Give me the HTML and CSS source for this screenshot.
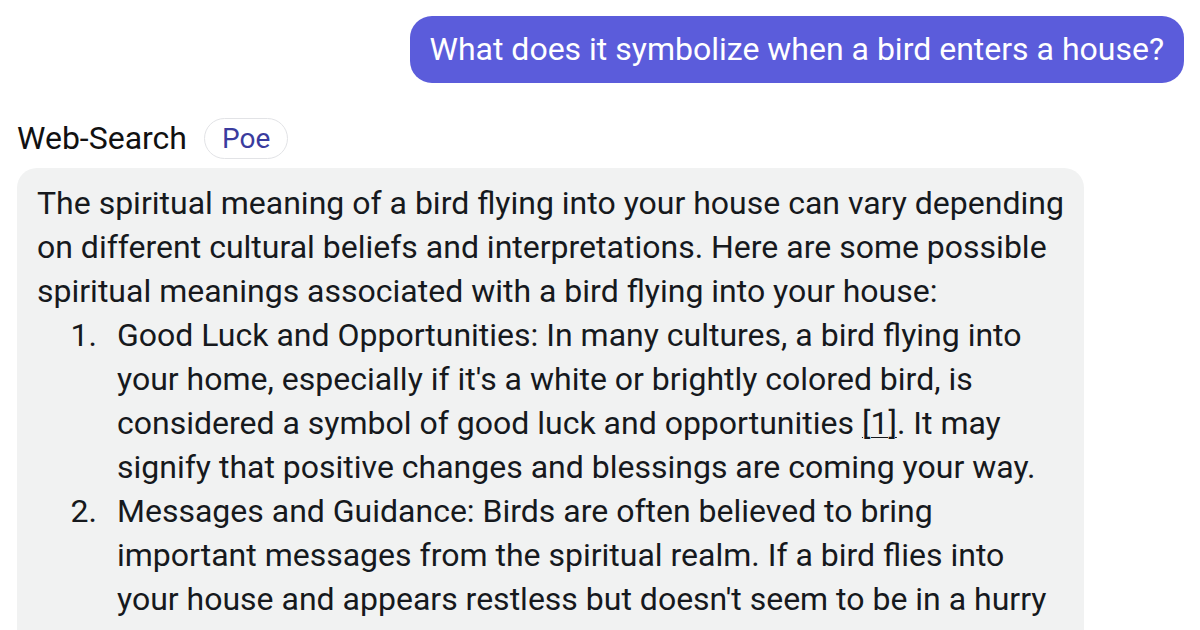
FILE: index.html
```html
<!DOCTYPE html>
<html>
<head>
<meta charset="utf-8">
<link rel="stylesheet" href="styles.css">
</head>
<body>
<div class="page">
  <div class="user-row">
    <div class="user-bubble">What does it symbolize when a bird enters a house?</div>
  </div>
  <div class="bot-head">
    <span class="bot-name">Web-Search</span>
    <span class="pill">Poe</span>
  </div>
  <div class="bot-bubble">
    <p class="para">The spiritual meaning of a bird flying into your house can vary depending on different cultural beliefs and interpretations. Here are some possible spiritual meanings associated with a bird flying into your house:</p>
    <ol class="list">
      <li class="item"><span class="num">1.</span><span class="txt">Good Luck and Opportunities: In many cultures, a bird flying into your home, especially if it's a white or brightly colored bird, is considered a symbol of good luck and opportunities <a class="ref">[1]</a>. It may signify that positive changes and blessings are coming your way.</span></li>
      <li class="item"><span class="num">2.</span><span class="txt">Messages and Guidance: Birds are often believed to bring important messages from the spiritual realm. If a bird flies into your house and appears restless but doesn't seem to be in a hurry to leave, it might be a sign that it is trying to deliver a message to you.</span></li>
    </ol>
  </div>
</div>
</body>
</html>
```
FILE: styles.css
```css
html, body {
  margin: 0;
  padding: 0;
  background: #ffffff;
  overflow: hidden;
}
body {
  width: 1200px;
  height: 630px;
  font-family: Roboto, "Noto Sans", sans-serif;
  color: #16191d;
}
.page {
  padding: 16px 16px 0 17px;
}
.user-row {
  display: flex;
  justify-content: flex-end;
}
.user-bubble {
  background: #5b5cdb;
  color: #ffffff;
  font-size: 32px;
  line-height: 38px;
  padding: 14px 20px 15px 20px;
  border-radius: 22px;
}
.bot-head {
  display: flex;
  align-items: center;
  margin-top: 34px;
  gap: 17px;
}
.bot-name {
  font-size: 32px;
  line-height: 42px;
  color: #111;
}
.pill {
  font-size: 28px;
  line-height: 38px;
  padding: 1px 17px 0 17px;
  border: 1.5px solid #e2e3e6;
  border-radius: 22px;
  color: #3a3b9e;
}
.bot-bubble {
  margin-top: 9px;
  width: 1067px;
  box-sizing: border-box;
  background: #f1f2f2;
  border-radius: 20px;
  padding: 13px 14px 20px 20px;
  font-size: 32px;
  line-height: 44px;
}
.para {
  margin: 0;
}
.list {
  list-style: none;
  margin: 0;
  padding: 0;
}
.item {
  display: grid;
  grid-template-columns: 80px 1fr;
}
.num {
  text-align: right;
  padding-right: 20px;
}
.ref {
  color: inherit;
  text-decoration: underline;
  text-underline-offset: 3px;
  text-decoration-thickness: 1px;
}
```
